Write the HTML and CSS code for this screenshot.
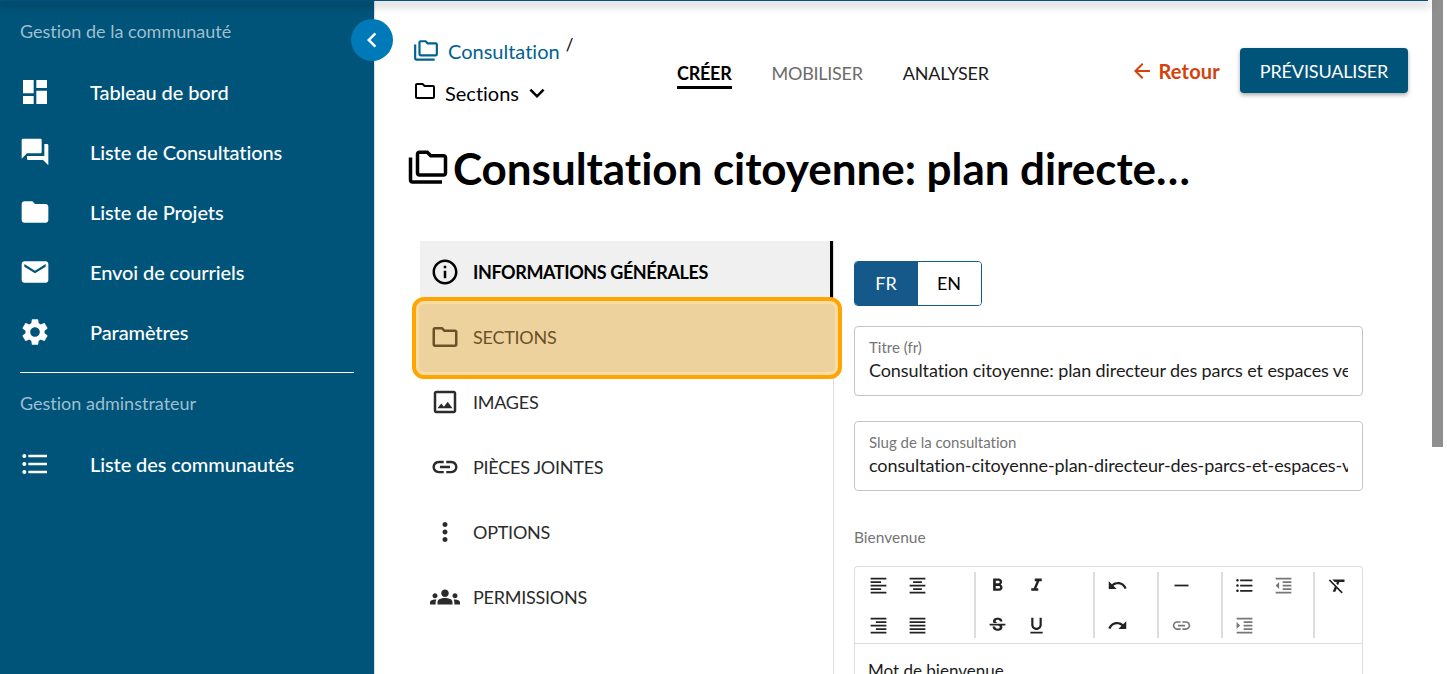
FILE: index.html
```html
<!DOCTYPE html>
<html lang="fr">
<head>
    <meta charset="UTF-8">
    <meta name="viewport" content="width=device-width, initial-scale=1.0">
    <title>Consultation citoyenne</title>
    <link rel="stylesheet" href="styles.css">
</head>
<body>
    <svg class="icon-sprite" aria-hidden="true">
        <symbol id="i-dashboard" viewBox="0 0 24 24"><path d="M3 13h8V3H3v10zm0 8h8v-6H3v6zm10 0h8V11h-8v10zm0-18v6h8V3h-8z"/></symbol>
        <symbol id="i-forum" viewBox="0 0 24 24"><path d="M21 6h-2v9H6v2c0 .55.45 1 1 1h11l4 4V7c0-.55-.45-1-1-1zm-4 6V3c0-.55-.45-1-1-1H3c-.55 0-1 .45-1 1v14l4-4h10c.55 0 1-.45 1-1z"/></symbol>
        <symbol id="i-folder" viewBox="0 0 24 24"><path d="M10 4H4c-1.1 0-1.99.9-1.99 2L2 18c0 1.1.9 2 2 2h16c1.1 0 2-.9 2-2V8c0-1.1-.9-2-2-2h-8l-2-2z"/></symbol>
        <symbol id="i-mail" viewBox="0 0 24 24"><path d="M20 4H4c-1.1 0-1.99.9-1.99 2L2 18c0 1.1.9 2 2 2h16c1.1 0 2-.9 2-2V6c0-1.1-.9-2-2-2zm0 4l-8 5-8-5V6l8 5 8-5v2z"/></symbol>
        <symbol id="i-settings" viewBox="0 0 24 24"><path d="M19.14 12.94c.04-.3.06-.61.06-.94 0-.32-.02-.64-.07-.94l2.03-1.58c.18-.14.23-.41.12-.61l-1.92-3.32c-.12-.22-.37-.29-.59-.22l-2.39.96c-.5-.38-1.03-.7-1.62-.94l-.36-2.54c-.04-.24-.24-.41-.48-.41h-3.84c-.24 0-.43.17-.47.41l-.36 2.54c-.59.24-1.13.57-1.62.94l-2.39-.96c-.22-.08-.47 0-.59.22L2.74 8.87c-.12.21-.08.47.12.61l2.03 1.58c-.05.3-.09.63-.09.94s.02.64.07.94l-2.03 1.58c-.18.14-.23.41-.12.61l1.92 3.32c.12.22.37.29.59.22l2.39-.96c.5.38 1.03.7 1.62.94l.36 2.54c.05.24.24.41.48.41h3.84c.24 0 .44-.17.47-.41l.36-2.54c.59-.24 1.13-.56 1.62-.94l2.39.96c.22.08.47 0 .59-.22l1.92-3.32c.12-.22.07-.47-.12-.61l-2.01-1.58zM12 15.6c-1.98 0-3.6-1.62-3.6-3.6s1.62-3.6 3.6-3.6 3.6 1.62 3.6 3.6-1.62 3.6-3.6 3.6z"/></symbol>
        <symbol id="i-list" viewBox="0 0 24 24"><path d="M4 10.5c-.83 0-1.5.67-1.5 1.5s.67 1.5 1.5 1.5 1.5-.67 1.5-1.5-.67-1.5-1.5-1.5zm0-6c-.83 0-1.5.67-1.5 1.5S3.17 7.5 4 7.5 5.5 6.83 5.5 6 4.83 4.5 4 4.5zm0 12c-.83 0-1.5.68-1.5 1.5s.68 1.5 1.5 1.5 1.5-.68 1.5-1.5-.67-1.5-1.5-1.5zM7 19h14v-2H7v2zm0-6h14v-2H7v2zm0-8v2h14V5H7z"/></symbol>
        <symbol id="i-chevron-left" viewBox="0 0 24 24"><path d="M15.41 7.41L14 6l-6 6 6 6 1.41-1.41L10.83 12z"/></symbol>
        <symbol id="i-expand" viewBox="0 0 24 24"><path d="M16.59 8.59L12 13.17 7.41 8.59 6 10l6 6 6-6z"/></symbol>
        <symbol id="i-back" viewBox="0 0 24 24"><path d="M20 11H7.83l5.59-5.59L12 4l-8 8 8 8 1.41-1.41L7.83 13H20v-2z"/></symbol>
        <symbol id="i-folder-copy" viewBox="0 0 24 24"><path d="M3 19h17v2H3c-1.1 0-2-.9-2-2V6h2v13zM23 6v9c0 1.1-.9 2-2 2H7c-1.1 0-2-.9-2-2V4c0-1.1.9-2 2-2h5l2 2h7c1.1 0 2 .9 2 2zM7 15h14V6h-7.83l-2-2H7v11z"/></symbol>
        <symbol id="i-folder-line" viewBox="0 0 24 24"><path d="M20 6h-8l-2-2H4c-1.1 0-1.99.9-1.99 2L2 18c0 1.1.9 2 2 2h16c1.1 0 2-.9 2-2V8c0-1.1-.9-2-2-2zm0 12H4V6h5.17l2 2H20v10z"/></symbol>
        <symbol id="i-info" viewBox="0 0 24 24"><path d="M11 7h2v2h-2zm0 4h2v6h-2zm1-9C6.48 2 2 6.48 2 12s4.48 10 10 10 10-4.48 10-10S17.52 2 12 2zm0 18c-4.41 0-8-3.59-8-8s3.59-8 8-8 8 3.59 8 8-3.59 8-8 8z"/></symbol>
        <symbol id="i-image" viewBox="0 0 24 24"><path d="M19 5v14H5V5h14m0-2H5c-1.1 0-2 .9-2 2v14c0 1.1.9 2 2 2h14c1.1 0 2-.9 2-2V5c0-1.1-.9-2-2-2zm-4.86 8.86l-3 3.87L9 13.14 6 17h12l-3.86-5.14z"/></symbol>
        <symbol id="i-link" viewBox="0 0 24 24"><path d="M3.9 12c0-1.71 1.39-3.1 3.1-3.1h4V7H7c-2.76 0-5 2.24-5 5s2.24 5 5 5h4v-1.9H7c-1.71 0-3.1-1.39-3.1-3.1zM8 13h8v-2H8v2zm9-6h-4v1.9h4c1.71 0 3.1 1.39 3.1 3.1s-1.39 3.1-3.1 3.1h-4V17h4c2.76 0 5-2.24 5-5s-2.24-5-5-5z"/></symbol>
        <symbol id="i-more" viewBox="0 0 24 24"><path d="M12 8c1.1 0 2-.9 2-2s-.9-2-2-2-2 .9-2 2 .9 2 2 2zm0 2c-1.1 0-2 .9-2 2s.9 2 2 2 2-.9 2-2-.9-2-2-2zm0 6c-1.1 0-2 .9-2 2s.9 2 2 2 2-.9 2-2-.9-2-2-2z"/></symbol>
        <symbol id="i-groups" viewBox="0 0 24 24"><path d="M12 12.75c1.63 0 3.07.39 4.24.9 1.08.48 1.76 1.56 1.76 2.73V18H6v-1.61c0-1.18.68-2.26 1.76-2.73 1.17-.52 2.61-.91 4.24-.91zM4 13c1.1 0 2-.9 2-2s-.9-2-2-2-2 .9-2 2 .9 2 2 2zm1.13 1.1c-.37-.06-.74-.1-1.13-.1-.99 0-1.93.21-2.78.58C.48 14.9 0 15.62 0 16.43V18h4.5v-1.61c0-.83.23-1.61.63-2.29zM20 13c1.1 0 2-.9 2-2s-.9-2-2-2-2 .9-2 2 .9 2 2 2zm4 3.43c0-.81-.48-1.53-1.22-1.85-.85-.37-1.79-.58-2.78-.58-.39 0-.76.04-1.13.1.4.68.63 1.46.63 2.29V18H24v-1.57zM12 6c1.66 0 3 1.34 3 3s-1.34 3-3 3-3-1.34-3-3 1.34-3 3-3z"/></symbol>
        <symbol id="i-left" viewBox="0 0 24 24"><path d="M15 15H3v2h12v-2zm0-8H3v2h12V7zM3 13h18v-2H3v2zm0 8h18v-2H3v2zM3 3v2h18V3H3z"/></symbol>
        <symbol id="i-center" viewBox="0 0 24 24"><path d="M7 15v2h10v-2H7zm-4 6h18v-2H3v2zm0-8h18v-2H3v2zm4-6v2h10V7H7zM3 3v2h18V3H3z"/></symbol>
        <symbol id="i-right" viewBox="0 0 24 24"><path d="M3 21h18v-2H3v2zm6-4h12v-2H9v2zm-6-4h18v-2H3v2zm6-4h12V7H9v2zM3 3v2h18V3H3z"/></symbol>
        <symbol id="i-justify" viewBox="0 0 24 24"><path d="M3 21h18v-2H3v2zm0-4h18v-2H3v2zm0-4h18v-2H3v2zm0-4h18V7H3v2zm0-6v2h18V3H3z"/></symbol>
        <symbol id="i-bold" viewBox="0 0 24 24"><path d="M15.6 10.79c.97-.67 1.65-1.77 1.65-2.79 0-2.26-1.75-4-4-4H7v14h7.04c2.09 0 3.71-1.7 3.71-3.79 0-1.52-.86-2.82-2.15-3.42zM10 6.5h3c.83 0 1.5.67 1.5 1.5s-.67 1.5-1.5 1.5h-3v-3zm3.5 9H10v-3h3.5c.83 0 1.5.67 1.5 1.5s-.67 1.5-1.5 1.5z"/></symbol>
        <symbol id="i-italic" viewBox="0 0 24 24"><path d="M10 4v3h2.21l-3.42 8H6v3h8v-3h-2.21l3.42-8H18V4z"/></symbol>
        <symbol id="i-strike" viewBox="0 0 24 24"><path d="M7.24 8.75c-.26-.48-.39-1.03-.39-1.67 0-.61.13-1.16.4-1.67.26-.5.63-.93 1.11-1.29.48-.35 1.05-.63 1.7-.83.66-.19 1.39-.29 2.18-.29.81 0 1.54.11 2.21.34.66.22 1.23.54 1.69.94.47.4.83.88 1.08 1.43.25.55.38 1.15.38 1.81h-3.01c0-.31-.05-.59-.15-.85-.09-.27-.24-.49-.44-.68-.2-.19-.45-.33-.75-.44-.3-.1-.66-.16-1.06-.16-.39 0-.74.04-1.03.13-.29.09-.53.21-.72.36-.19.16-.34.34-.44.55-.1.21-.15.43-.15.66 0 .48.25.88.74 1.21.38.25.77.48 1.41.7H7.39c-.05-.08-.11-.17-.15-.25zM21 12v-2H3v2h9.62c.18.07.4.14.55.2.37.17.66.34.87.51.21.17.35.36.43.57.07.2.11.43.11.69 0 .23-.05.45-.14.66-.09.2-.23.38-.42.53-.19.15-.42.26-.71.35-.29.08-.63.13-1.01.13-.43 0-.83-.04-1.18-.13s-.66-.23-.91-.42c-.25-.19-.45-.44-.59-.75-.14-.31-.25-.76-.25-1.21H6.4c0 .55.08 1.13.24 1.58.16.45.37.85.65 1.21.28.35.6.66.98.92.37.26.78.48 1.22.65.44.17.9.3 1.38.39.48.08.96.13 1.44.13.8 0 1.53-.09 2.18-.28s1.21-.45 1.67-.79c.46-.34.82-.77 1.07-1.27s.38-1.07.38-1.71c0-.6-.1-1.14-.31-1.61-.05-.11-.11-.23-.17-.33H21z"/></symbol>
        <symbol id="i-underline" viewBox="0 0 24 24"><path d="M12 17c3.31 0 6-2.69 6-6V3h-2.5v8c0 1.93-1.57 3.5-3.5 3.5S8.5 12.93 8.5 11V3H6v8c0 3.31 2.69 6 6 6zm-7 2v2h14v-2H5z"/></symbol>
        <symbol id="i-undo" viewBox="0 0 24 24"><path d="M12.5 8c-2.65 0-5.05.99-6.9 2.6L2 7v9h9l-3.62-3.62c1.39-1.16 3.16-1.88 5.12-1.88 3.54 0 6.55 2.31 7.6 5.5l2.37-.78C21.08 11.03 17.15 8 12.5 8z"/></symbol>
        <symbol id="i-redo" viewBox="0 0 24 24"><path d="M18.4 10.6C16.55 8.99 14.15 8 11.5 8c-4.65 0-8.58 3.03-9.96 7.22L3.9 16c1.05-3.19 4.05-5.5 7.6-5.5 1.95 0 3.73.72 5.12 1.88L13 16h9V7l-3.6 3.6z"/></symbol>
        <symbol id="i-rule" viewBox="0 0 24 24"><path d="M4 11h16v2H4z"/></symbol>
        <symbol id="i-outdent" viewBox="0 0 24 24"><path d="M11 17h10v-2H11v2zm-8-5l4 4V8l-4 4zm0 9h18v-2H3v2zM3 3v2h18V3H3zm8 6h10V7H11v2zm0 4h10v-2H11v2z"/></symbol>
        <symbol id="i-indent" viewBox="0 0 24 24"><path d="M3 21h18v-2H3v2zM3 8v8l4-4-4-4zm8 9h10v-2H11v2zM3 3v2h18V3H3zm8 6h10V7H11v2zm0 4h10v-2H11v2z"/></symbol>
        <symbol id="i-clear" viewBox="0 0 24 24"><path d="M3.27 5L2 6.27l6.97 6.97L6.5 19h3l1.57-3.66L16.73 21 18 19.73 3.55 5.27 3.27 5zM6 5v.18L8.82 8h2.4l-.72 1.68 2.1 2.1L14.21 8H20V5H6z"/></symbol>
    </svg>

    <div class="top-line"></div>

    <!-- Sidebar -->
    <aside class="sidebar">
        <button class="collapse-btn" aria-label="Réduire"><svg class="icon-collapse"><use href="#i-chevron-left"/></svg></button>
        <p class="side-title">Gestion de la communauté</p>
        <a class="side-link"><svg class="side-icon"><use href="#i-dashboard"/></svg>Tableau de bord</a>
        <a class="side-link"><svg class="side-icon"><use href="#i-forum"/></svg>Liste de Consultations</a>
        <a class="side-link"><svg class="side-icon"><use href="#i-folder"/></svg>Liste de Projets</a>
        <a class="side-link"><svg class="side-icon"><use href="#i-mail"/></svg>Envoi de courriels</a>
        <a class="side-link"><svg class="side-icon"><use href="#i-settings"/></svg>Paramètres</a>
        <hr class="side-rule">
        <p class="side-title side-title-admin">Gestion adminstrateur</p>
        <a class="side-link"><svg class="side-icon"><use href="#i-list"/></svg>Liste des communautés</a>
    </aside>

    <main class="main">
        <header class="topbar">
            <div class="crumbs">
                <div class="crumb-row">
                    <svg class="crumb-icon-lg"><use href="#i-folder-copy"/></svg>
                    <a class="crumb-link">Consultation</a>
                    <span class="crumb-sep">/</span>
                </div>
                <div class="crumb-row crumb-current">
                    <svg class="crumb-icon"><use href="#i-folder-line"/></svg>
                    <span>Sections</span>
                    <svg class="crumb-caret"><use href="#i-expand"/></svg>
                </div>
            </div>
            <nav class="tabs">
                <a class="tab tab-active">CRÉER</a>
                <a class="tab">MOBILISER</a>
                <a class="tab tab-dark">ANALYSER</a>
            </nav>
            <div class="actions">
                <a class="back-link"><svg class="back-icon"><use href="#i-back"/></svg>Retour</a>
                <button class="btn-preview">PRÉVISUALISER</button>
            </div>
        </header>

        <div class="title-row">
            <svg class="title-icon"><use href="#i-folder-copy"/></svg>
            <h1 class="page-title">Consultation citoyenne: plan directeur des parcs et espaces verts</h1>
        </div>

        <div class="content">
            <nav class="section-nav">
                <a class="section-item section-active"><svg class="section-icon"><use href="#i-info"/></svg>INFORMATIONS GÉNÉRALES</a>
                <a class="section-item section-focus"><svg class="section-icon"><use href="#i-folder-line"/></svg>SECTIONS</a>
                <a class="section-item"><svg class="section-icon"><use href="#i-image"/></svg>IMAGES</a>
                <a class="section-item"><svg class="section-icon"><use href="#i-link"/></svg>PIÈCES JOINTES</a>
                <a class="section-item"><svg class="section-icon"><use href="#i-more"/></svg>OPTIONS</a>
                <a class="section-item"><svg class="section-icon"><use href="#i-groups"/></svg>PERMISSIONS</a>
            </nav>

            <section class="form">
                <div class="lang-switch">
                    <button class="lang lang-on">FR</button>
                    <button class="lang">EN</button>
                </div>
                <div class="field">
                    <label class="field-label">Titre (fr)</label>
                    <div class="field-value">Consultation citoyenne: plan directeur des parcs et espaces verts</div>
                </div>
                <div class="field">
                    <label class="field-label">Slug de la consultation</label>
                    <div class="field-value">consultation-citoyenne-plan-directeur-des-parcs-et-espaces-verts</div>
                </div>
                <p class="editor-label">Bienvenue</p>
                <div class="editor">
                    <div class="toolbar">
                        <div class="tool-group group-first">
                            <svg class="tool"><use href="#i-left"/></svg>
                            <svg class="tool"><use href="#i-center"/></svg>
                            <svg class="tool"><use href="#i-right"/></svg>
                            <svg class="tool"><use href="#i-justify"/></svg>
                        </div>
                        <div class="tool-group group-two">
                            <svg class="tool"><use href="#i-bold"/></svg>
                            <svg class="tool"><use href="#i-italic"/></svg>
                            <svg class="tool"><use href="#i-strike"/></svg>
                            <svg class="tool"><use href="#i-underline"/></svg>
                        </div>
                        <div class="tool-group group-one">
                            <svg class="tool"><use href="#i-undo"/></svg>
                            <svg class="tool"><use href="#i-redo"/></svg>
                        </div>
                        <div class="tool-group group-one">
                            <svg class="tool"><use href="#i-rule"/></svg>
                            <svg class="tool tool-off"><use href="#i-link"/></svg>
                        </div>
                        <div class="tool-group group-lists">
                            <svg class="tool"><use href="#i-list"/></svg>
                            <svg class="tool tool-off"><use href="#i-outdent"/></svg>
                            <svg class="tool tool-off"><use href="#i-indent"/></svg>
                        </div>
                        <div class="tool-group group-last">
                            <svg class="tool"><use href="#i-clear"/></svg>
                        </div>
                    </div>
                    <div class="editor-body">Mot de bienvenue</div>
                </div>
            </section>
        </div>
    </main>

    <div class="scrollbar"><div class="scroll-thumb"></div></div>
</body>
</html>
```

FILE: styles.css
```css
* {
    box-sizing: border-box;
}
html, body {
    height: 100%;
}
body {
    display: flex;
    margin: 0;
    overflow: hidden;
    font-family: 'Lato', sans-serif;
    font-variant-ligatures: none;
    color: #000;
    background-color: #fff;
}
svg {
    fill: currentColor;
    flex: none;
}
a {
    cursor: pointer;
}
.icon-sprite {
    display: none;
}

/* top shadow line */
.top-line {
    position: absolute;
    top: 0;
    left: 0;
    width: 1428px;
    height: 1px;
    background-color: #00537a;
    box-shadow: 0 3px 8px 2px rgba(0,0,0,0.22);
    z-index: 3;
}

/* sidebar */
.sidebar {
    position: relative;
    flex: none;
    width: 374px;
    padding: 0 20px;
    background-color: #005379;
    color: #fff;
    box-shadow: 1px 0 1px rgba(0,0,0,0.12);
}
.side-title {
    margin: 0;
    padding-top: 20px;
    height: 62px;
    font-size: 18px;
    line-height: 22px;
    color: #9ebfcf;
}
.side-title-admin {
    padding-top: 19px;
    height: 61px;
}
.side-link {
    display: flex;
    align-items: center;
    height: 60px;
    font-size: 20px;
    font-weight: 500;
    letter-spacing: -0.1px;
    color: #fff;
}
.side-icon {
    width: 32px;
    height: 32px;
    margin-left: -1px;
    margin-right: 39px;
}
.side-rule {
    margin: 10px 0 0;
    border: none;
    border-top: 1px solid #fff;
}
.collapse-btn {
    position: absolute;
    top: 19px;
    left: 351px;
    display: flex;
    align-items: center;
    justify-content: center;
    width: 42px;
    height: 42px;
    padding: 0;
    border: none;
    border-radius: 50%;
    background-color: #0079b8;
    color: #fff;
    z-index: 4;
}
.icon-collapse {
    width: 30px;
    height: 30px;
}

/* main */
.main {
    flex: none;
    width: 1054px;
    height: 100%;
    padding: 0 20px 0 39px;
    overflow: hidden;
}
.topbar {
    display: flex;
    align-items: flex-start;
    height: 116px;
}
.crumbs {
    width: 264px;
    padding-top: 33px;
}
.crumb-row {
    display: flex;
    align-items: center;
    height: 36px;
    font-size: 20px;
}
.crumb-current {
    height: 42px;
    padding-top: 6px;
}
.crumb-icon-lg {
    width: 26px;
    height: 26px;
    margin-right: 9px;
    color: #00628f;
}
.crumb-link {
    color: #00628f;
}
.crumb-sep {
    align-self: flex-start;
    margin-left: 6px;
    font-size: 17px;
    line-height: 24px;
}
.crumb-icon {
    width: 24px;
    height: 24px;
    margin-right: 8px;
    margin-top: -4px;
}
.crumb-caret {
    width: 30px;
    height: 30px;
    margin-left: 3px;
}
.tabs {
    display: flex;
    gap: 40px;
    padding-top: 61px;
}
.tab {
    height: 28px;
    font-size: 18px;
    line-height: 24px;
    letter-spacing: -0.25px;
    color: #6b6b6b;
}
.tab-dark {
    color: #1c1c1c;
}
.tab-active {
    font-weight: 700;
    color: #000;
    border-bottom: 3px solid #000;
}
.actions {
    display: flex;
    align-items: center;
    gap: 20px;
    margin-left: auto;
    padding-top: 48px;
}
.back-link {
    display: flex;
    align-items: center;
    font-size: 20px;
    font-weight: 700;
    letter-spacing: 0.2px;
    color: #d4410b;
}
.back-icon {
    width: 24px;
    height: 24px;
    margin-right: 4px;
}
.btn-preview {
    width: 168px;
    height: 45px;
    border: none;
    border-radius: 4px;
    background-color: #005379;
    color: #fff;
    font-family: inherit;
    font-size: 18px;
    letter-spacing: -0.15px;
    box-shadow: 0 2px 4px rgba(0,0,0,0.35);
}

/* page title */
.title-row {
    display: flex;
    align-items: center;
    gap: 4px;
    height: 104px;
    margin-left: -6px;
}
.title-icon {
    width: 42px;
    height: 42px;
}
.page-title {
    width: 745px;
    margin: 0;
    font-size: 44px;
    font-weight: 700;
    line-height: 54px;
    letter-spacing: -0.05px;
    white-space: nowrap;
    overflow: hidden;
    text-overflow: ellipsis;
}

/* left section menu */
.content {
    display: flex;
    height: 500px;
    margin-top: 21px;
}
.section-nav {
    flex: none;
    width: 414px;
    margin-left: 7px;
    border-right: 1px solid #ddd;
}
.section-item {
    display: flex;
    align-items: center;
    height: 65px;
    padding: 0 0 3px 10px;
    font-size: 18px;
    letter-spacing: -0.25px;
    color: #2b2b2b;
}
.section-icon {
    width: 30px;
    height: 30px;
    margin-right: 13px;
    color: #2b2b2b;
}
.section-active {
    background-color: #f0f0f0;
    border-right: 3px solid #000;
    font-weight: 700;
    letter-spacing: -0.4px;
    color: #000;
}
.section-active .section-icon {
    color: #000;
}
.section-focus {
    position: relative;
    isolation: isolate;
    color: #6a5228;
}
.section-focus .section-icon {
    color: #6a5228;
}
.section-focus::before {
    content: "";
    position: absolute;
    top: -9px;
    right: -9px;
    bottom: -8px;
    left: -8px;
    z-index: -1;
    border: 4px solid #ffa500;
    border-radius: 12px;
    background-color: #edd29e;
    box-shadow: inset 0 0 0 3px #f9dca6;
}

/* form */
.form {
    flex: none;
    width: 509px;
    margin-left: 20px;
    padding-top: 20px;
}
.lang-switch {
    display: flex;
    width: 128px;
    height: 45px;
    border: 1px solid #15598a;
    border-radius: 4px;
    overflow: hidden;
}
.lang {
    flex: 1;
    padding: 0 1px 2px 0;
    border: none;
    background-color: #fff;
    color: #000;
    font-family: inherit;
    font-size: 18px;
}
.lang-on {
    background-color: #15598a;
    color: #fff;
}
.field {
    height: 70px;
    margin-top: 20px;
    padding: 10px 14px 0;
    border: 1px solid #c4c4c4;
    border-radius: 4px;
}
.field + .field {
    margin-top: 25px;
}
.field-label {
    display: block;
    font-size: 15px;
    line-height: 20px;
    color: #757575;
}
.field-value {
    font-size: 18px;
    line-height: 26px;
    letter-spacing: -0.1px;
    white-space: nowrap;
    overflow: hidden;
    color: #1c1c1c;
}
.editor-label {
    margin: 36px 0 0;
    font-size: 15.5px;
    line-height: 20px;
    color: #757575;
}
.editor {
    margin-top: 19px;
    border: 1px solid #ddd;
    border-bottom: none;
    border-radius: 4px 4px 0 0;
}
.toolbar {
    display: flex;
    height: 77px;
    padding: 5px 0 5px 3px;
    border-bottom: 1px solid #ddd;
}
.tool-group {
    display: grid;
    grid-auto-rows: 40px;
    justify-items: center;
    align-items: center;
    height: 66px;
    border-right: 2px solid #ddd;
}
.group-first {
    grid-template-columns: 39px 39px;
    width: 118px;
    padding-left: 1px;
}
.group-two {
    grid-template-columns: 39px 39px;
    width: 119px;
    padding-left: 2px;
}
.group-one {
    grid-template-columns: 40px;
    width: 64px;
    padding-left: 2px;
}
.group-lists {
    grid-template-columns: 39px 39px;
    width: 92px;
    padding-left: 2px;
}
.group-last {
    grid-template-columns: 40px;
    padding-left: 2px;
    border-right: none;
}
.tool {
    width: 21px;
    height: 21px;
    margin-top: -14px;
    color: #222;
}
.tool-off {
    color: #777;
}
.editor-body {
    padding: 15px 13px;
    font-size: 17px;
    line-height: 24px;
    color: #1c1c1c;
}

/* scrollbar */
.scrollbar {
    flex: none;
    width: 19px;
    padding-left: 4px;
}
.scroll-thumb {
    width: 11px;
    height: 447px;
    background-color: #8f8f8f;
}
```
